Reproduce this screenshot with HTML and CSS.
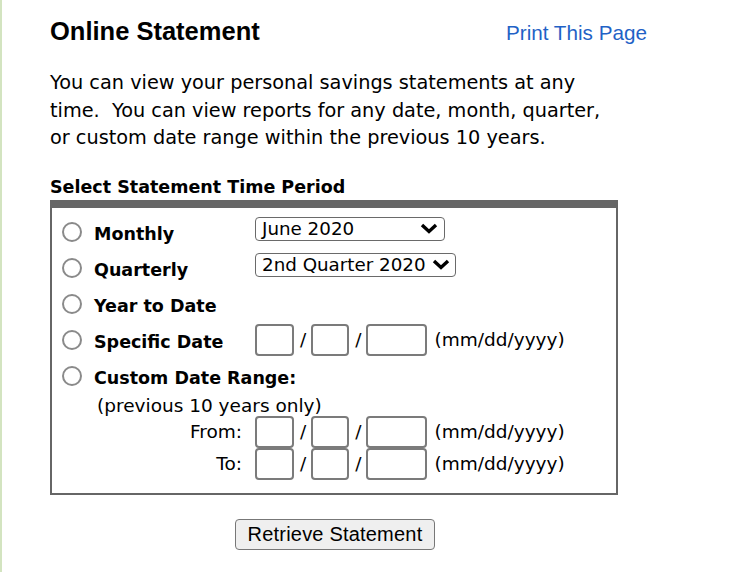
FILE: index.html
```html
<!DOCTYPE html>
<html lang="en">
<head>
<meta charset="utf-8">
<title>Online Statement</title>
<link rel="stylesheet" href="styles.css">
</head>
<body>
<div class="page">
  <div class="header">
    <h1 class="title">Online Statement</h1>
    <a class="print-link" href="#">Print This Page</a>
  </div>
  <p class="intro">You can view your personal savings statements at any time.&nbsp; You can view reports for any date, month, quarter, or custom date range within the previous 10 years.</p>
  <div class="section-title">Select Statement Time Period</div>
  <div class="period-box">
    <div class="opt">
      <span class="radio"></span>
      <span class="opt-label">Monthly</span>
      <div class="select select-month"><span>June 2020</span><svg class="chev" viewBox="0 0 18 11" width="18" height="11"><polyline points="2,2 9,8.5 16,2" fill="none" stroke="#000" stroke-width="3.4"/></svg></div>
    </div>
    <div class="opt">
      <span class="radio"></span>
      <span class="opt-label">Quarterly</span>
      <div class="select select-quarter"><span>2nd Quarter 2020</span><svg class="chev" viewBox="0 0 18 11" width="18" height="11"><polyline points="2,2 9,8.5 16,2" fill="none" stroke="#000" stroke-width="3.4"/></svg></div>
    </div>
    <div class="opt">
      <span class="radio"></span>
      <span class="opt-label">Year to Date</span>
    </div>
    <div class="opt">
      <span class="radio"></span>
      <span class="opt-label">Specific Date</span>
      <div class="date date-specific">
        <span class="field f-mm"></span><span class="slash">/</span><span class="field f-dd"></span><span class="slash">/</span><span class="field f-yy"></span><span class="fmt">(mm/dd/yyyy)</span>
      </div>
    </div>
    <div class="opt">
      <span class="radio"></span>
      <span class="opt-label">Custom Date Range:</span>
    </div>
    <div class="note">(previous 10 years only)</div>
    <div class="range-row">
      <span class="range-label">From:</span>
      <div class="date">
        <span class="field f-mm"></span><span class="slash">/</span><span class="field f-dd"></span><span class="slash">/</span><span class="field f-yy"></span><span class="fmt">(mm/dd/yyyy)</span>
      </div>
    </div>
    <div class="range-row">
      <span class="range-label">To:</span>
      <div class="date">
        <span class="field f-mm"></span><span class="slash">/</span><span class="field f-dd"></span><span class="slash">/</span><span class="field f-yy"></span><span class="fmt">(mm/dd/yyyy)</span>
      </div>
    </div>
  </div>
  <div class="actions">
    <button class="btn" type="button">Retrieve Statement</button>
  </div>
</div>
</body>
</html>
```

FILE: styles.css
```css
html, body {
  margin: 0;
  padding: 0;
  background: #fff;
}

.page {
  border-left: 2px solid #d3e4c0;
  min-height: 572px;
  box-sizing: border-box;
  padding: 16px 0 0 48px;
  font-family: "DejaVu Sans", Verdana, sans-serif;
  color: #000;
}

.header {
  display: flex;
  justify-content: space-between;
  align-items: baseline;
  width: 597px;
}

.title {
  margin: 0;
  font-family: "Liberation Sans", Arial, sans-serif;
  font-weight: bold;
  font-size: 25.5px;
  line-height: 30px;
}

.print-link {
  font-family: "Liberation Sans", Arial, sans-serif;
  font-size: 20.7px;
  color: #1f62c6;
  text-decoration: none;
}

.intro {
  margin: 23px 0 0 0;
  width: 556px;
  font-size: 19.3px;
  line-height: 27.5px;
}

.section-title {
  margin-top: 24px;
  font-weight: bold;
  font-size: 17.5px;
  line-height: 22px;
}

.period-box {
  margin-top: 2px;
  width: 568px;
  box-sizing: border-box;
  border: 2px solid #666;
  border-top: 8px solid #666;
  padding: 8px 0 13px 10px;
}

.opt {
  display: flex;
  align-items: center;
  height: 36px;
}

.radio {
  width: 20px;
  height: 20px;
  box-sizing: border-box;
  border: 2px solid #8a8a8a;
  border-radius: 50%;
  background: #fff;
  flex: none;
  margin-right: 12px;
  position: relative;
  top: -2px;
}

.opt-label {
  font-weight: bold;
  font-size: 17.5px;
  min-width: 161px;
  white-space: nowrap;
  flex: none;
}

.select {
  display: flex;
  align-items: center;
  justify-content: space-between;
  gap: 6px;
  box-sizing: border-box;
  height: 24px;
  border: 1.5px solid #6a6a6a;
  border-radius: 4px;
  padding: 0 6px 0 6px;
  font-size: 18.3px;
  margin-top: -10px;
  white-space: nowrap;
}

.select-month { width: 190px; }
.select-quarter { width: 201px; padding-right: 8px; }

.chev { display: block; flex: none; }

.date {
  display: flex;
  align-items: center;
  font-size: 18.5px;
}

.date-specific { margin-top: -4px; }

.field {
  display: block;
  height: 32px;
  box-sizing: border-box;
  border: 2px solid #7b7b7b;
  border-radius: 4px;
  background: #fff;
}

.f-mm { width: 39px; }
.f-dd { width: 38px; }
.f-yy { width: 61px; }

.slash { margin: 0 5px 0 6px; }

.fmt { margin-left: 7px; }

.note {
  font-size: 18.5px;
  line-height: 20px;
  padding-left: 35px;
}

.range-row {
  display: flex;
  align-items: center;
  height: 32px;
}

.range-label {
  width: 180px;
  text-align: right;
  margin-right: 13px;
  font-size: 18.5px;
}

.actions {
  padding: 24px 0 0 185px;
}

.btn {
  width: 200px;
  height: 31px;
  box-sizing: border-box;
  border: 1.5px solid #777;
  border-radius: 4px;
  background: #efefef;
  font-family: "Liberation Sans", Arial, sans-serif;
  font-size: 20px;
  letter-spacing: 0.2px;
  color: #000;
  padding: 0;
}
```
